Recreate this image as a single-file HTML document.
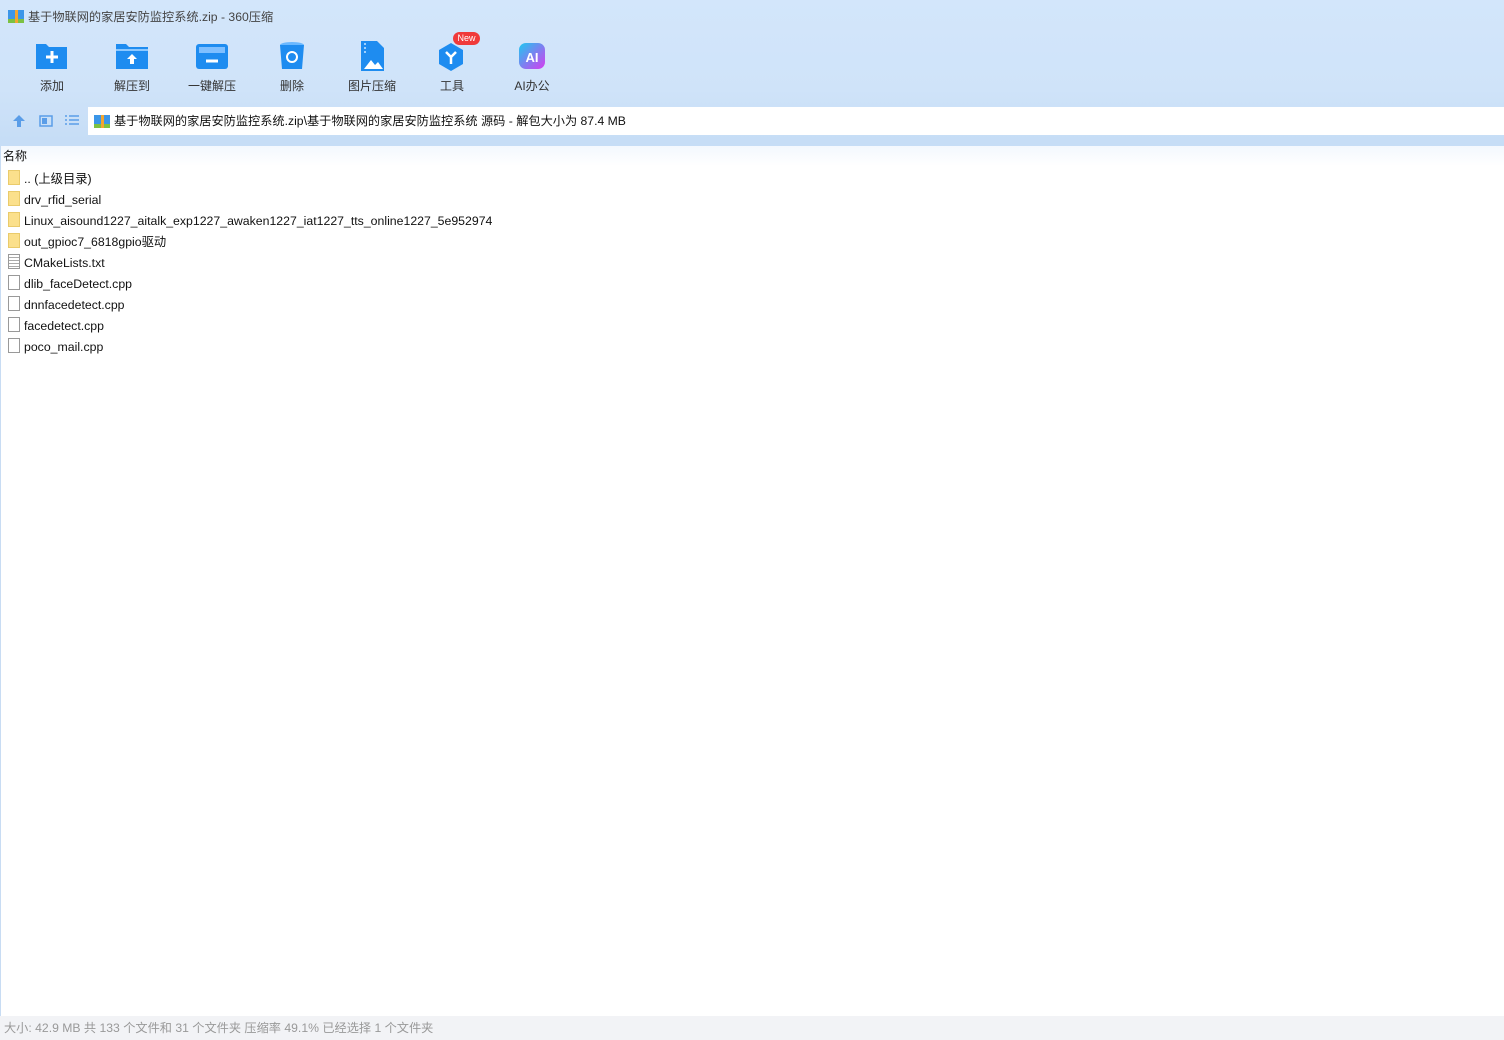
<!DOCTYPE html>
<html><head><meta charset="utf-8">
<style>
*{margin:0;padding:0;box-sizing:border-box}
body{width:1504px;height:1040px;overflow:hidden;font-family:"Liberation Sans","Noto Sans CJK SC",sans-serif;background:#fff;position:relative}
.top{position:absolute;left:0;top:0;width:1504px;height:146px;background:linear-gradient(#d3e6fb,#cfe3f9 90px,#c6ddf6 140px)}
.title{position:absolute;left:28px;top:9px;font-size:12.2px;color:#444;line-height:16px}
.tb{position:absolute;top:41px;width:80px;text-align:center;font-size:12px;color:#333;line-height:14px}
.tb svg{display:block;margin:0 auto 8px;height:30px}
.addr{position:absolute;left:88px;top:107px;width:1416px;height:28px;background:#fff;font-size:12.2px;color:#111;padding:0 0 0 26px;line-height:28px}
.list{position:absolute;left:0;top:146px;width:1504px;height:870px;background:linear-gradient(#f3f8fe,#fff 20px);border-left:1px solid #c8dcf3}
.hdr{position:absolute;left:2px;top:2px;font-size:12px;color:#111;line-height:16px}
.row{position:absolute;left:7px;height:20px;width:800px;font-size:12.3px;color:#111;white-space:nowrap}
.row span{position:absolute;left:16px;top:1px;line-height:20px}
.fold{position:absolute;left:0;top:2px;width:12px;height:15px;background:#fbe08c;border:1px solid #eacb6b}
.file{position:absolute;left:0;top:2px;width:12px;height:15px;background:#fff;border:1px solid #999}
.status{position:absolute;left:0;top:1016px;width:1504px;height:24px;background:#f2f3f6;font-size:12.2px;color:#999;padding:0 0 0 4px;line-height:24px}
</style></head><body>
<div class="top"></div>
<svg style="position:absolute;left:8px;top:9px" width="16" height="14"><rect x="0" y="1" width="16" height="13" fill="#3b96e8"/><rect x="0" y="10" width="16" height="4" fill="#7cc142"/><rect x="7" y="1" width="3" height="13" fill="#f2a530"/></svg>
<div class="title">基于物联网的家居安防监控系统.zip - 360压缩</div>

<div class="tb" style="left:12px"><svg width="34" height="30"><path d="M1 3h10l3 3h18v22H1z" fill="#1e8cf0"/><path d="M17 10v12M11 16h12" stroke="#fff" stroke-width="3"/></svg>添加</div>
<div class="tb" style="left:92px"><svg width="34" height="30"><path d="M1 3h10l3 3h19v22H1z" fill="#1e8cf0"/><path d="M1 9h32" stroke="#8cc8ff" stroke-width="2"/><path d="M17 13l-5 5h3v5h4v-5h3z" fill="#fff"/></svg>解压到</div>
<div class="tb" style="left:172px"><svg width="34" height="30"><rect x="1" y="3" width="32" height="25" rx="3" fill="#1e8cf0"/><path d="M4 6h26v6H4z" fill="#7fbfff"/><path d="M11 20h12" stroke="#fff" stroke-width="3"/></svg>一键解压</div>
<div class="tb" style="left:252px"><svg width="34" height="30"><ellipse cx="17" cy="4" rx="12" ry="3" fill="#6ab8ff"/><path d="M5 4l2 24h20l2-24z" fill="#1e8cf0"/><circle cx="17" cy="16" r="5" fill="none" stroke="#fff" stroke-width="2"/></svg>删除</div>
<div class="tb" style="left:332px"><svg width="34" height="30"><path d="M6 0h16l7 7v23H6z" fill="#1e8cf0"/><path d="M9 28l7-9 4 5 3-3 5 7z" fill="#fff"/><path d="M10 2v12" stroke="#9fd0ff" stroke-dasharray="2 2" stroke-width="2"/></svg>图片压缩</div>
<div class="tb" style="left:412px"><svg width="34" height="30"><path d="M16 2l12 7v14l-12 7-12-7V9z" fill="#1e8cf0"/><path d="M11 11l5 5 5-5M16 16v7" stroke="#fff" stroke-width="2.5" fill="none"/></svg>工具</div>
<div style="position:absolute;left:453px;top:32px;width:27px;height:13px;border-radius:7px;background:#f03a3a;color:#fff;font-size:9px;text-align:center;line-height:13px">New</div>
<div class="tb" style="left:492px"><svg width="30" height="30"><defs><linearGradient id="g" x1="0" y1="0" x2="1" y2="1"><stop offset="0" stop-color="#1ec8f0"/><stop offset="1" stop-color="#d63cf0"/></linearGradient></defs><rect x="2" y="2" width="26" height="26" rx="7" fill="url(#g)"/><text x="15" y="21" font-size="13" font-weight="bold" fill="#fff" text-anchor="middle" font-family="Liberation Sans">AI</text></svg>AI办公</div>

<svg style="position:absolute;left:12px;top:114px" width="70" height="14"><path d="M7 1l6 6H9v6H5V7H1z" fill="#5a9de8"/><rect x="28" y="2" width="12" height="10" fill="none" stroke="#5a9de8" stroke-width="1.5"/><rect x="30" y="4" width="5" height="6" fill="#5a9de8"/><path d="M53 2h2M53 6h2M53 10h2M57 2h10M57 6h10M57 10h10" stroke="#5a9de8" stroke-width="1.5"/></svg>
<div class="addr"><svg style="position:absolute;left:6px;top:7px" width="16" height="14"><rect x="0" y="1" width="16" height="13" fill="#3b96e8"/><rect x="0" y="10" width="16" height="4" fill="#7cc142"/><rect x="7" y="1" width="3" height="13" fill="#f2a530"/></svg>基于物联网的家居安防监控系统.zip\基于物联网的家居安防监控系统 源码 - 解包大小为 87.4 MB</div>

<div class="list">
<div class="hdr">名称</div>
<div class="row" style="top:22px"><i class="fold"></i><span>.. (上级目录)</span></div>
<div class="row" style="top:43px"><i class="fold"></i><span>drv_rfid_serial</span></div>
<div class="row" style="top:64px"><i class="fold"></i><span>Linux_aisound1227_aitalk_exp1227_awaken1227_iat1227_tts_online1227_5e952974</span></div>
<div class="row" style="top:85px"><i class="fold"></i><span>out_gpioc7_6818gpio驱动</span></div>
<div class="row" style="top:106px"><i class="file" style="background:repeating-linear-gradient(#fff 0 2px,#aaa 2px 3px)"></i><span>CMakeLists.txt</span></div>
<div class="row" style="top:127px"><i class="file"></i><span>dlib_faceDetect.cpp</span></div>
<div class="row" style="top:148px"><i class="file"></i><span>dnnfacedetect.cpp</span></div>
<div class="row" style="top:169px"><i class="file"></i><span>facedetect.cpp</span></div>
<div class="row" style="top:190px"><i class="file"></i><span>poco_mail.cpp</span></div>
</div>
<div class="status">大小: 42.9 MB 共 133 个文件和 31 个文件夹 压缩率 49.1% 已经选择 1 个文件夹</div>
</body></html>
